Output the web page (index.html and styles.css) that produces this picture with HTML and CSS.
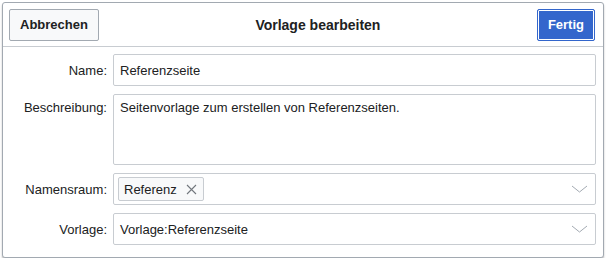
FILE: index.html
```html
<!DOCTYPE html>
<html lang="de">
<head>
    <meta charset="UTF-8">
    <meta name="viewport" content="width=device-width, initial-scale=1.0">
    <title>Vorlage bearbeiten</title>
    <link rel="stylesheet" href="styles.css">
</head>
<body>
    <div class="dialog">
        <header class="dialog-head">
            <button class="btn">Abbrechen</button>
            <h1 class="dialog-title">Vorlage bearbeiten</h1>
            <button class="btn btn-primary">Fertig</button>
        </header>
        <div class="dialog-body">
            <label class="field-label">Name:</label>
            <div class="field">Referenzseite</div>

            <label class="field-label label-top">Beschreibung:</label>
            <div class="field field-area">Seitenvorlage zum erstellen von Referenzseiten.</div>

            <label class="field-label">Namensraum:</label>
            <div class="field field-select">
                <span class="tag">Referenz
                    <svg class="tag-x" width="11" height="11" viewBox="0 0 11 11"><path d="M1 1l9 9M10 1l-9 9" stroke="#72777d" stroke-width="1.1" fill="none"/></svg>
                </span>
                <svg class="chevron" width="17" height="8" viewBox="0 0 17 8"><path d="M1 1l7.5 6L16 1" stroke="#a2a9b1" stroke-width="1" fill="none"/></svg>
            </div>

            <label class="field-label">Vorlage:</label>
            <div class="field field-select">
                <span>Vorlage:Referenzseite</span>
                <svg class="chevron" width="17" height="8" viewBox="0 0 17 8"><path d="M1 1l7.5 6L16 1" stroke="#a2a9b1" stroke-width="1" fill="none"/></svg>
            </div>
        </div>
    </div>
</body>
</html>
```

FILE: styles.css
```css
body {
    margin: 0;
    padding: 0;
    font-family: 'Liberation Sans', Arial, sans-serif;
    font-size: 13px;
    color: #202122;
    background: #fff;
}
.dialog {
    margin: 2px 0 0 2px;
    width: 602px;
    height: 256px;
    box-sizing: border-box;
    border: 1px solid #a2a9b1;
    border-radius: 3px;
    background: #fff;
    box-shadow: 0 2px 2px rgba(0, 0, 0, 0.25);
    overflow: hidden;
}
.dialog-head {
    display: flex;
    align-items: center;
    height: 43px;
    padding: 0 8px 0 6px;
    border-bottom: 1px solid #c8ccd1;
}
.dialog-title {
    flex: 1;
    margin: 0;
    text-align: center;
    font-size: 14px;
    font-weight: bold;
    color: #202122;
}
.btn {
    height: 32px;
    padding: 0 10px;
    font-family: inherit;
    font-size: 13px;
    font-weight: bold;
    color: #202122;
    background: #f8f9fa;
    border: 1px solid #a2a9b1;
    border-radius: 2px;
}
.btn-primary {
    color: #fff;
    background: #36c;
    border-color: #36c;
    box-shadow: inset 0 0 0 1px #fff;
}
.dialog-body {
    display: grid;
    grid-template-columns: 104px 1fr;
    column-gap: 6px;
    row-gap: 8px;
    padding: 7px 7px 0 0;
}
.field-label {
    text-align: right;
    align-self: center;
    color: #202122;
}
.label-top {
    align-self: start;
    padding-top: 6px;
}
.field {
    height: 32px;
    box-sizing: border-box;
    border: 1px solid #c8ccd1;
    border-radius: 2px;
    padding: 0 6px;
    display: flex;
    align-items: center;
}
.field-area {
    height: 71px;
    align-items: flex-start;
    padding-top: 5px;
}
.field-select {
    justify-content: space-between;
    padding-right: 7px;
}
.tag {
    display: flex;
    align-items: center;
    gap: 9px;
    height: 22px;
    margin-left: -2px;
    padding: 0 6px 0 5px;
    background: #f8f9fa;
    border: 1px solid #c8ccd1;
    border-radius: 2px;
}
.chevron {
    display: block;
}
```
